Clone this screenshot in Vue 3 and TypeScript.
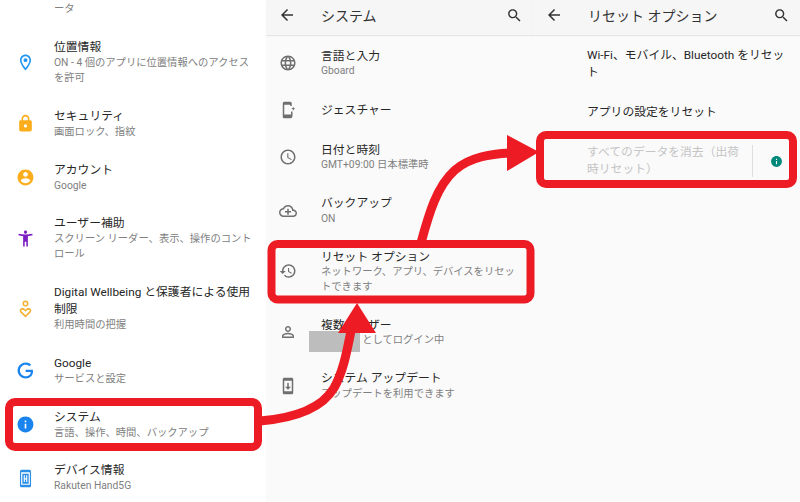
<script setup lang="ts">
interface SettingRow {
  title: string;
  sub?: string;
  icon?: string;
  color?: string;
}

const icons: Record<string, string> = {
  location:
    'M12 2C8.13 2 5 5.13 5 9c0 5.25 7 13 7 13s7-7.75 7-13c0-3.87-3.13-7-7-7zM7 9c0-2.76 2.24-5 5-5s5 2.24 5 5c0 2.88-2.88 7.19-5 9.88C9.92 16.21 7 11.85 7 9zM12 6.5a2.5 2.5 0 1 0 0 5 2.5 2.5 0 0 0 0-5z',
  lock: 'M18 8h-1V6c0-2.76-2.24-5-5-5S7 3.24 7 6v2H6c-1.1 0-2 .9-2 2v10c0 1.1.9 2 2 2h12c1.1 0 2-.9 2-2V10c0-1.1-.9-2-2-2zm-6 9c-1.1 0-2-.9-2-2s.9-2 2-2 2 .9 2 2-.9 2-2 2zM9 8V6c0-1.66 1.34-3 3-3s3 1.34 3 3v2H9z',
  account:
    'M12 2C6.48 2 2 6.48 2 12s4.48 10 10 10 10-4.48 10-10S17.52 2 12 2zm0 3c1.66 0 3 1.34 3 3s-1.34 3-3 3-3-1.34-3-3 1.34-3 3-3zm0 14.2c-2.5 0-4.71-1.28-6-3.22.03-1.99 4-3.08 6-3.08 1.99 0 5.97 1.09 6 3.08-1.29 1.94-3.5 3.22-6 3.22z',
  accessibility:
    'M20.5 6c-2.61.7-5.67 1-8.5 1s-5.89-.3-8.5-1L3 8c1.86.5 4 .83 6 1v13h2v-6h2v6h2V9c2-.17 4.14-.5 6-1l-.5-2zM12 6c1.1 0 2-.9 2-2s-.9-2-2-2-2 .9-2 2 .9 2 2 2z',
  wellbeing:
    'M12 1.900a3.800 3.800 0 1 0 0 7.600 3.800 3.800 0 0 0 0-7.600zm0 1.900a1.900 1.900 0 1 1 0 3.800 1.900 1.900 0 0 1 0-3.800zM12 23.500L5.600 17C3.500 14.600 5.200 11.500 8 11.500C9.700 11.500 11 12.300 12 13.600C13 12.300 14.300 11.500 16 11.500C18.800 11.500 20.500 14.600 18.400 17zM12 20.600L16.900 15.600C18 14.400 17.200 13.600 16 13.600C14.500 13.600 13.200 14.600 12 16.200C10.800 14.600 9.500 13.600 8 13.600C6.800 13.600 6 14.400 7.100 15.600z',
  google:
    'M21.35 11.1h-9.17v2.73h6.51c-.33 3.81-3.5 5.44-6.5 5.44C8.36 19.27 5 16.25 5 12c0-4.1 3.2-7.27 7.2-7.27 3.09 0 4.9 1.97 4.9 1.97L19 4.72S16.56 2 12.1 2C6.42 2 2.03 6.8 2.03 12c0 5.05 4.13 10 10.22 10 5.35 0 9.25-3.67 9.25-9.09 0-1.15-.15-1.81-.15-1.81z',
  info: 'M12 2C6.48 2 2 6.48 2 12s4.48 10 10 10 10-4.48 10-10S17.52 2 12 2zm1 15h-2v-6h2v6zm0-8h-2V7h2v2z',
  device:
    'M7 1h10a2 2 0 0 1 2 2v18a2 2 0 0 1-2 2H7a2 2 0 0 1-2-2V3a2 2 0 0 1 2-2zM6.500 4v16h11V4zM8 6h8v12.500H8zM9.800 8v8.500h1.400v-3.200h1.600v3.200h1.400V8h-1.400v3.600h-1.600V8z',
  language:
    'M11.99 2C6.47 2 2 6.48 2 12s4.47 10 9.99 10C17.52 22 22 17.52 22 12S17.52 2 11.99 2zm6.93 6h-2.95c-.32-1.25-.78-2.45-1.38-3.56 1.84.63 3.37 1.91 4.33 3.56zM12 4.04c.83 1.2 1.48 2.53 1.91 3.96h-3.82c.43-1.43 1.08-2.76 1.91-3.96zM4.26 14C4.1 13.36 4 12.69 4 12s.1-1.36.26-2h3.38c-.08.66-.14 1.32-.14 2 0 .68.06 1.34.14 2H4.26zm.82 2h2.95c.32 1.25.78 2.45 1.38 3.56-1.84-.63-3.37-1.9-4.33-3.56zm2.95-8H5.08c.96-1.66 2.49-2.93 4.33-3.56C8.81 5.55 8.35 6.75 8.03 8zM12 19.96c-.83-1.2-1.48-2.53-1.91-3.96h3.82c-.43 1.43-1.08 2.76-1.91 3.96zM14.34 14H9.66c-.09-.66-.16-1.32-.16-2 0-.68.07-1.35.16-2h4.68c.09.65.16 1.32.16 2 0 .68-.07 1.34-.16 2zm.25 5.56c.6-1.11 1.06-2.31 1.38-3.56h2.95c-.96 1.65-2.49 2.93-4.33 3.56zM16.36 14c.08-.66.14-1.32.14-2 0-.68-.06-1.34-.14-2h3.38c.16.64.26 1.31.26 2s-.1 1.36-.26 2h-3.38z',
  gesture:
    'M7 1h8a2 2 0 0 1 2 2v3.500h-2V5H7v13h9v-4h2v6a3 3 0 0 1-3 3H7a2 2 0 0 1-2-2V3a2 2 0 0 1 2-2zM19 7.500l.8 1.900 1.900.8-1.900.8-.8 1.900-.8-1.900-1.900-.8 1.900-.8z',
  clock:
    'M11.99 2C6.47 2 2 6.48 2 12s4.47 10 9.99 10C17.52 22 22 17.52 22 12S17.52 2 11.99 2zM12 20c-4.42 0-8-3.58-8-8s3.58-8 8-8 8 3.58 8 8-3.58 8-8 8zM12.500 7H11v6l5.250 3.150.75-1.230-4.500-2.670z',
  backup:
    'M19.35 10.04C18.67 6.59 15.64 4 12 4 9.11 4 6.6 5.64 5.35 8.04 2.34 8.36 0 10.91 0 14c0 3.31 2.69 6 6 6h13c2.76 0 5-2.24 5-5 0-2.64-2.05-4.78-4.65-4.96zM19 18H6c-2.21 0-4-1.79-4-4s1.79-4 4-4h.71C7.37 7.69 9.48 6 12 6c3.04 0 5.5 2.46 5.5 5.500v.5H19c1.660 0 3 1.340 3 3s-1.340 3-3 3zM11 9h2v3h3v2h-3v3h-2v-3H8v-2h3z',
  history:
    'M13 3c-4.970 0-9 4.030-9 9H1l3.890 3.890.07.14L9 12H6c0-3.870 3.130-7 7-7s7 3.130 7 7-3.130 7-7 7c-1.930 0-3.680-.79-4.940-2.060l-1.420 1.420C8.270 19.990 10.510 21 13 21c4.970 0 9-4.030 9-9s-4.030-9-9-9zm-1 5v5l4.280 2.540.72-1.210-3.500-2.080V8H12z',
  person:
    'M12 5.900c1.160 0 2.100.94 2.100 2.100s-.94 2.100-2.100 2.100S9.900 9.160 9.900 8s.94-2.100 2.100-2.100zm0 9c2.970 0 6.100 1.460 6.100 2.100v1.100H5.900V17c0-.64 3.130-2.100 6.100-2.100zM12 4C9.790 4 8 5.790 8 8s1.790 4 4 4 4-1.790 4-4-1.790-4-4-4zm0 9c-2.670 0-8 1.340-8 4v3h16v-3c0-2.660-5.330-4-8-4z',
  update:
    'M17 1.010L7 1c-1.100 0-2 .9-2 2v18c0 1.100.9 2 2 2h10c1.100 0 2-.9 2-2V3c0-1.100-.9-1.990-2-1.990zM17 19H7V5h10v14zm-1-6h-3V8h-2v5H8l4 4 4-4z',
  back: 'M20 11H7.830l5.590-5.590L12 4l-8 8 8 8 1.410-1.410L7.830 13H20v-2z',
  search:
    'M15.500 14h-.79l-.28-.27C15.410 12.590 16 11.110 16 9.500 16 5.910 13.090 3 9.500 3S3 5.910 3 9.500 5.910 16 9.500 16c1.610 0 3.090-.59 4.230-1.570l.27.28v.79l5 4.990L20.490 19l-4.990-5zm-6 0C7.010 14 5 11.990 5 9.500S7.010 5 9.500 5 14 7.010 14 9.500 11.990 14 9.500 14z',
};

const settings: SettingRow[] = [
  { title: '位置情報', sub: 'ON - 4 個のアプリに位置情報へのアクセスを許可', icon: 'location', color: '#2196f3' },
  { title: 'セキュリティ', sub: '画面ロック、指紋', icon: 'lock', color: '#fbad1c' },
  { title: 'アカウント', sub: 'Google', icon: 'account', color: '#fbad1c' },
  { title: 'ユーザー補助', sub: 'スクリーン リーダー、表示、操作のコントロール', icon: 'accessibility', color: '#7b1fc2' },
  { title: 'Digital Wellbeing と保護者による使用制限', sub: '利用時間の把握', icon: 'wellbeing', color: '#f2b134' },
  { title: 'Google', sub: 'サービスと設定', icon: 'google', color: '#1a84ee' },
  { title: 'システム', sub: '言語、操作、時間、バックアップ', icon: 'info', color: '#1a84ee' },
  { title: 'デバイス情報', sub: 'Rakuten Hand5G', icon: 'device', color: '#2b8fe8' },
];

const system: SettingRow[] = [
  { title: '言語と入力', sub: 'Gboard', icon: 'language' },
  { title: 'ジェスチャー', icon: 'gesture' },
  { title: '日付と時刻', sub: 'GMT+09:00 日本標準時', icon: 'clock' },
  { title: 'バックアップ', sub: 'ON', icon: 'backup' },
  { title: 'リセット オプション', sub: 'ネットワーク、アプリ、デバイスをリセットできます', icon: 'history' },
  { title: '複数ユーザー', sub: '\u3000\u3000\u3000\u3000としてログイン中', icon: 'person' },
  { title: 'システム アップデート', sub: 'アップデートを利用できます', icon: 'update' },
];
</script>

<template>
  <div class="screen">
    <section class="column first">
      <p class="cut-off">ータ</p>
      <div v-for="row in settings" :key="row.title" class="row">
        <svg class="row-icon" viewBox="0 0 24 24" :fill="row.color">
          <path fill-rule="evenodd" :d="icons[row.icon!]" />
        </svg>
        <div class="row-text">
          <div class="title">{{ row.title }}</div>
          <div class="sub">{{ row.sub }}</div>
        </div>
      </div>
    </section>

    <section class="column middle">
      <header class="bar">
        <svg class="bar-back" viewBox="0 0 24 24"><path :d="icons.back" /></svg>
        <h1>システム</h1>
        <svg class="bar-search" viewBox="0 0 24 24"><path :d="icons.search" /></svg>
      </header>
      <div v-for="row in system" :key="row.title" class="row">
        <svg class="row-icon" viewBox="0 0 24 24" fill="#6f6f6f">
          <path fill-rule="evenodd" :d="icons[row.icon!]" />
        </svg>
        <div class="row-text">
          <div class="title">{{ row.title }}</div>
          <div v-if="row.sub" class="sub">{{ row.sub }}</div>
        </div>
      </div>
    </section>

    <section class="column">
      <header class="bar">
        <svg class="bar-back" viewBox="0 0 24 24"><path :d="icons.back" /></svg>
        <h1>リセット オプション</h1>
        <svg class="bar-search" viewBox="0 0 24 24"><path :d="icons.search" /></svg>
      </header>
      <div class="row plain">
        <div class="row-text"><div class="title">Wi-Fi、モバイル、Bluetooth をリセット</div></div>
      </div>
      <div class="row plain">
        <div class="row-text"><div class="title">アプリの設定をリセット</div></div>
      </div>
      <div class="row plain disabled">
        <div class="row-text"><div class="title">すべてのデータを消去（出荷時リセット）</div></div>
        <div class="row-end">
          <svg viewBox="0 0 24 24" fill="#00897b"><path fill-rule="evenodd" :d="icons.info" /></svg>
        </div>
      </div>
    </section>

    <!-- blurred-out account name -->
    <div class="redact"></div>

    <!-- red markup drawn over the screenshots -->
    <svg class="markup" viewBox="0 0 800 502">
      <g fill="none" stroke="#ed1c24" stroke-width="8">
        <rect x="9" y="402" width="249" height="45" rx="6" />
        <rect x="271.500" y="244" width="259" height="55.500" rx="6" />
        <rect x="540" y="135" width="253" height="49" rx="6" />
        <path stroke-width="9" d="M260 421C296 418 322 408 334 388C344 370 347 350 352 326" />
        <path stroke-width="9" d="M421 243C429 213 437 186 455 170C470 157 490 154 512 153" />
      </g>
      <path fill="#ed1c24" d="M357 303L376 333H338zM539 152L507 135V171z" />
    </svg>
  </div>
</template>

<style>
html,
body {
  margin: 0;
  background: #fff;
}
</style>

<style scoped>
.screen {
  position: relative;
  display: grid;
  grid-template-columns: 266px 267px 267px;
  width: 800px;
  height: 502px;
  overflow: hidden;
  background: #fafafa;
  font-family: Roboto, 'Noto Sans CJK JP', sans-serif;
}

.column {
  min-width: 0;
}

.first {
  background: #fff;
}

.cut-off {
  margin: 0;
  padding: 1px 0 12px 54px;
  font-size: 10.3px;
  line-height: 15px;
  color: #808080;
}

.bar {
  display: flex;
  align-items: center;
  height: 30px;
  padding-bottom: 5px;
  margin-bottom: 1px;
  background: #f6f6f6;
  box-shadow: 0 1px 1px rgba(0, 0, 0, 0.08);
}

.bar h1 {
  flex: 1;
  margin: 0;
  font-size: 14px;
  font-weight: 400;
  color: #333;
}

.bar-back {
  width: 18px;
  height: 18px;
  margin: 0 25px 0 12px;
  fill: #333;
}

.bar-search {
  width: 17px;
  height: 17px;
  margin-right: 10px;
  fill: #333;
}

.row {
  display: flex;
  align-items: center;
  padding: 11.5px 12px 11px 16px;
}

.first .row {
  padding-top: 11.25px;
  padding-bottom: 11.15px;
}

.first .title {
  line-height: 17px;
}

.row-icon {
  flex: none;
  width: 19px;
  height: 19px;
  margin-right: 19px;
}

.middle .row {
  padding-left: 13px;
}

.middle .row-icon {
  width: 18px;
  height: 18px;
  margin-right: 24px;
}

.row-text {
  flex: 1;
  min-width: 0;
}

.title {
  font-size: 11.8px;
  line-height: 16.5px;
  color: #262626;
}

.sub {
  font-size: 10.3px;
  line-height: 14.5px;
  color: #808080;
}

.row.plain {
  padding: 11px 12px 12px 54px;
}

.plain .title {
  line-height: 17px;
}

.row.disabled {
  padding-right: 0;
}

.disabled .title {
  color: #c4c4c4;
}

.row-end {
  flex: none;
  display: flex;
  align-items: center;
  justify-content: center;
  width: 48px;
  height: 32px;
  margin-left: 10px;
  border-left: 1px solid #dedede;
  box-sizing: border-box;
}

.row-end svg {
  width: 13px;
  height: 13px;
}

.redact {
  position: absolute;
  left: 309px;
  top: 331px;
  width: 51px;
  height: 21px;
  background: #bdbdbd;
}

.markup {
  position: absolute;
  left: 0;
  top: 0;
  width: 800px;
  height: 502px;
  pointer-events: none;
}
</style>
